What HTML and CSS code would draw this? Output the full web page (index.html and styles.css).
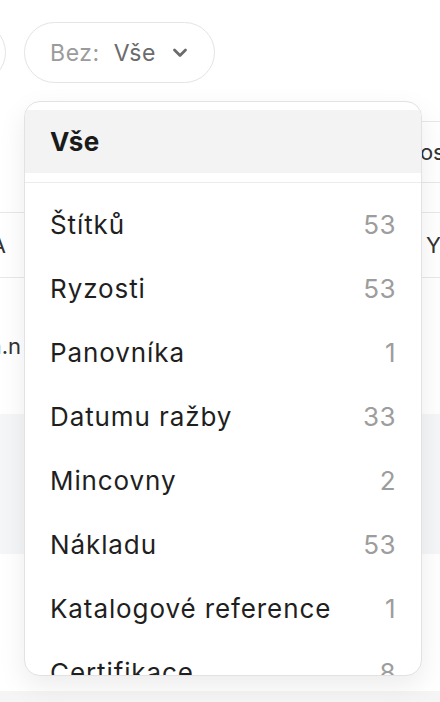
FILE: index.html
```html
<!DOCTYPE html>
<html lang="cs">
<head>
<meta charset="utf-8">
<title>Filtr</title>
<link rel="stylesheet" href="styles.css">
</head>
<body>
<div class="page">
  <div class="toolbar">
    <div class="pill pill-prev">Řadit: Vše</div>
    <button class="pill pill-active" type="button">
      <span class="pill-label">Bez:</span>
      <span class="pill-value">Vše</span>
      <svg class="chev" width="16" height="12" viewBox="0 0 16 12"><path d="M2.5 3 L8 8.5 L13.5 3" fill="none" stroke="#6b6b6b" stroke-width="2.8" stroke-linecap="round" stroke-linejoin="round"/></svg>
    </button>
  </div>

  <div class="table">
    <div class="thead"><span class="th-text">Pos</span></div>
    <div class="tsub"></div>
    <div class="trow">
      <span class="cell-left">A</span>
      <span class="cell-right">Y</span>
    </div>
    <div class="trow trow-tall">
      <span class="cell-left">a.n</span>
    </div>
    <div class="band"></div>
    <div class="blank"></div>
    <div class="foot"></div>
  </div>

  <div class="menu">
    <div class="menu-head">Vše</div>
    <div class="menu-sep"></div>
    <ul class="menu-list">
      <li class="menu-item"><span>Štítků</span><span class="count">53</span></li>
      <li class="menu-item"><span>Ryzosti</span><span class="count">53</span></li>
      <li class="menu-item"><span>Panovníka</span><span class="count">1</span></li>
      <li class="menu-item"><span>Datumu ražby</span><span class="count">33</span></li>
      <li class="menu-item"><span>Mincovny</span><span class="count">2</span></li>
      <li class="menu-item"><span>Nákladu</span><span class="count">53</span></li>
      <li class="menu-item"><span>Katalogové reference</span><span class="count">1</span></li>
      <li class="menu-item"><span>Certifikace</span><span class="count">8</span></li>
    </ul>
  </div>
</div>
</body>
</html>
```
FILE: styles.css
```css
* { box-sizing: border-box; }
html, body {
  margin: 0;
  padding: 0;
  background: #ffffff;
}
body {
  font-family: Inter, "Noto Sans", sans-serif;
  color: #1f1f1f;
  width: 440px;
  height: 702px;
  overflow: hidden;
}
.page {
  position: relative;
  width: 440px;
  height: 702px;
  overflow: hidden;
}
.toolbar {
  display: flex;
  gap: 18px;
  padding-top: 22px;
  margin-left: -150px;
}
.pill {
  height: 61px;
  border: 1.5px solid #e4e4e4;
  border-radius: 31px;
  background: #fff;
  display: flex;
  align-items: center;
  font-family: inherit;
  font-size: 23px;
  letter-spacing: 0.6px;
  padding: 0 0 0 25px;
  margin: 0;
  flex: none;
}
.pill-prev {
  width: 156px;
  color: #9a9a9a;
  overflow: hidden;
  white-space: nowrap;
}
.pill-active {
  width: 191px;
}
.pill-label {
  color: #9b9b9b;
}
.pill-value {
  color: #6b6b6b;
  margin-left: 14px;
}
.chev {
  margin-left: 16px;
  margin-top: 1px;
}
.table {
  margin-top: 38px;
}
.thead {
  margin-left: 240px;
  height: 62px;
  border-top: 1px solid #e8e8e8;
  border-bottom: 1px solid #e8e8e8;
  display: flex;
  align-items: center;
  padding-left: 166px;
  font-size: 22px;
  color: #333;
}
.tsub {
  margin-left: 240px;
  height: 29px;
}
.trow {
  height: 66px;
  border-top: 1px solid #e8e8e8;
  border-bottom: 1px solid #e8e8e8;
  display: flex;
  align-items: center;
  justify-content: space-between;
  font-size: 22px;
  color: #333;
}
.trow-tall {
  height: 136px;
  border-top: none;
  border-bottom: none;
  justify-content: flex-start;
}
.cell-left {
  width: 6px;
  display: flex;
  justify-content: flex-end;
  white-space: nowrap;
}
.trow-tall .cell-left {
  width: 21px;
}
.cell-right {
  width: 14px;
  white-space: nowrap;
}
.band {
  height: 140px;
  background: #f5f6f8;
}
.blank {
  height: 137px;
}
.foot {
  height: 20px;
  background: #f5f5f6;
}
.menu {
  position: absolute;
  left: 24px;
  top: 101px;
  width: 398px;
  height: 575px;
  background: #fff;
  border: 1px solid #e2e2e2;
  border-radius: 16px;
  box-shadow: 0 10px 28px rgba(0, 0, 0, 0.08);
  overflow: hidden;
  padding-top: 8px;
}
.menu-head {
  height: 63px;
  background: #f3f3f3;
  display: flex;
  align-items: center;
  padding-left: 25px;
  font-size: 26px;
  font-weight: 700;
  letter-spacing: 0.5px;
  color: #1a1a1a;
}
.menu-sep {
  margin-top: 9px;
  height: 1px;
  background: #ececec;
}
.menu-list {
  list-style: none;
  margin: 0;
  padding: 9px 0 0;
}
.menu-item {
  height: 64px;
  display: flex;
  align-items: center;
  justify-content: space-between;
  padding: 0 25px;
  font-size: 26px;
  letter-spacing: 0.9px;
  color: #1f1f1f;
}
.count {
  color: #9d9d9d;
  letter-spacing: 0.5px;
}
```
